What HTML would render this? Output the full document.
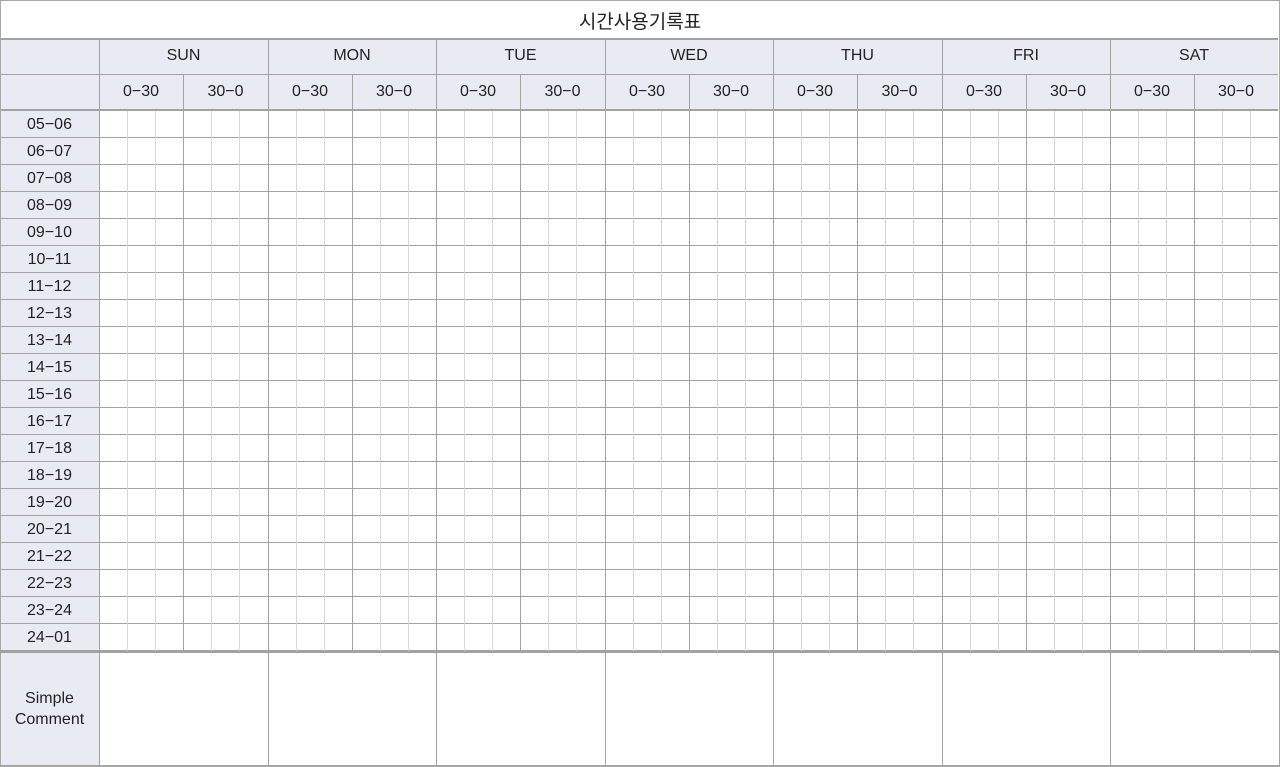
<!DOCTYPE html>
<html><head><meta charset="utf-8"><style>
*{margin:0;padding:0;box-sizing:border-box}
body{width:1280px;height:767px;background:#fff;position:relative;overflow:hidden;font-family:"Liberation Sans","Noto Sans CJK KR",sans-serif;color:#222}
.a{position:absolute}
.t{position:absolute;text-align:center;font-size:16px}
.hd{background:#e8ecf2}
.day{position:absolute;top:111px;height:540px;
background:
linear-gradient(to right,#a2a2a2 1px,transparent 1px) 0 0/100% 100% no-repeat,
linear-gradient(to right,transparent 84px,#a2a2a2 84px,#a2a2a2 85px,transparent 85px) 0 0/100% 100% no-repeat,
linear-gradient(to right,transparent 28px,#d6d6d6 28px,#d6d6d6 29px,transparent 29px,transparent 56px,#d6d6d6 56px,#d6d6d6 57px,transparent 57px,transparent 112px,#d6d6d6 112px,#d6d6d6 113px,transparent 113px,transparent 140px,#d6d6d6 140px,#d6d6d6 141px,transparent 141px) 0 0/100% 100% no-repeat,
linear-gradient(to bottom,transparent 26px,#a2a2a2 26px) 0 0/100% 27px repeat-y;}
</style></head><body>
<div class="a" style="left:0;top:0;width:1280px;height:767px;border:1px solid #a8a8a8"></div>
<div class="t" style="left:0;top:7px;width:1280px;font-size:19px">시간사용기록표</div>
<div class="a hd" style="left:1px;top:38px;width:1277px;height:73px;border-top:2px solid #a2a2a2;border-bottom:2px solid #a2a2a2"></div>
<div class="a" style="left:99px;top:74px;width:1179px;height:1px;background:#a2a2a2"></div>
<div class="a" style="left:1px;top:74px;width:98px;height:1px;background:#a2a2a2"></div>
<div class="a hd" style="left:1px;top:111px;width:98px;height:654px"></div>
<div class="a" style="left:99px;top:38px;width:1px;height:727px;background:#a2a2a2"></div>

<div class="day" style="left:99px;width:169px"></div>
<div class="day" style="left:268px;width:168px"></div>
<div class="day" style="left:436px;width:169px"></div>
<div class="day" style="left:605px;width:168px"></div>
<div class="day" style="left:773px;width:169px"></div>
<div class="day" style="left:942px;width:168px"></div>
<div class="day" style="left:1110px;width:168px"></div>
<div class="a" style="left:0;top:111px;width:99px;height:540px;background:linear-gradient(to bottom,transparent 26px,#a2a2a2 26px) 0 0/100% 27px repeat-y"></div>
<div class="a" style="left:0;top:651px;width:1280px;height:2px;background:#a2a2a2"></div>
<div class="a" style="left:0;top:765px;width:1280px;height:1px;background:#a2a2a2"></div>

<div class="a" style="left:268px;top:38px;width:1px;height:727px;background:#a2a2a2"></div>
<div class="a" style="left:436px;top:38px;width:1px;height:727px;background:#a2a2a2"></div>
<div class="a" style="left:605px;top:38px;width:1px;height:727px;background:#a2a2a2"></div>
<div class="a" style="left:773px;top:38px;width:1px;height:727px;background:#a2a2a2"></div>
<div class="a" style="left:942px;top:38px;width:1px;height:727px;background:#a2a2a2"></div>
<div class="a" style="left:1110px;top:38px;width:1px;height:727px;background:#a2a2a2"></div>
<div class="a" style="left:183px;top:74px;width:1px;height:36px;background:#a2a2a2"></div>
<div class="a" style="left:352px;top:74px;width:1px;height:36px;background:#a2a2a2"></div>
<div class="a" style="left:520px;top:74px;width:1px;height:36px;background:#a2a2a2"></div>
<div class="a" style="left:689px;top:74px;width:1px;height:36px;background:#a2a2a2"></div>
<div class="a" style="left:857px;top:74px;width:1px;height:36px;background:#a2a2a2"></div>
<div class="a" style="left:1026px;top:74px;width:1px;height:36px;background:#a2a2a2"></div>
<div class="a" style="left:1194px;top:74px;width:1px;height:36px;background:#a2a2a2"></div>

<div class="t" style="left:99px;top:47px;width:169px">SUN</div>
<div class="t" style="left:268px;top:47px;width:168px">MON</div>
<div class="t" style="left:436px;top:47px;width:169px">TUE</div>
<div class="t" style="left:605px;top:47px;width:168px">WED</div>
<div class="t" style="left:773px;top:47px;width:169px">THU</div>
<div class="t" style="left:942px;top:47px;width:168px">FRI</div>
<div class="t" style="left:1110px;top:47px;width:168px">SAT</div>

<div class="t" style="left:99px;top:83px;width:84px">0−30</div><div class="t" style="left:183px;top:83px;width:85px">30−0</div>
<div class="t" style="left:268px;top:83px;width:84px">0−30</div><div class="t" style="left:352px;top:83px;width:84px">30−0</div>
<div class="t" style="left:436px;top:83px;width:84px">0−30</div><div class="t" style="left:520px;top:83px;width:85px">30−0</div>
<div class="t" style="left:605px;top:83px;width:84px">0−30</div><div class="t" style="left:689px;top:83px;width:84px">30−0</div>
<div class="t" style="left:773px;top:83px;width:84px">0−30</div><div class="t" style="left:857px;top:83px;width:85px">30−0</div>
<div class="t" style="left:942px;top:83px;width:84px">0−30</div><div class="t" style="left:1026px;top:83px;width:84px">30−0</div>
<div class="t" style="left:1110px;top:83px;width:84px">0−30</div><div class="t" style="left:1194px;top:83px;width:84px">30−0</div>

<div class="t" style="left:0;top:111px;width:99px;line-height:27px">
05−06<br>06−07<br>07−08<br>08−09<br>09−10<br>10−11<br>11−12<br>12−13<br>13−14<br>14−15<br>15−16<br>16−17<br>17−18<br>18−19<br>19−20<br>20−21<br>21−22<br>22−23<br>23−24<br>24−01</div>
<div class="t" style="left:0;top:688px;width:99px;line-height:21px">Simple<br>Comment</div>
</body></html>
